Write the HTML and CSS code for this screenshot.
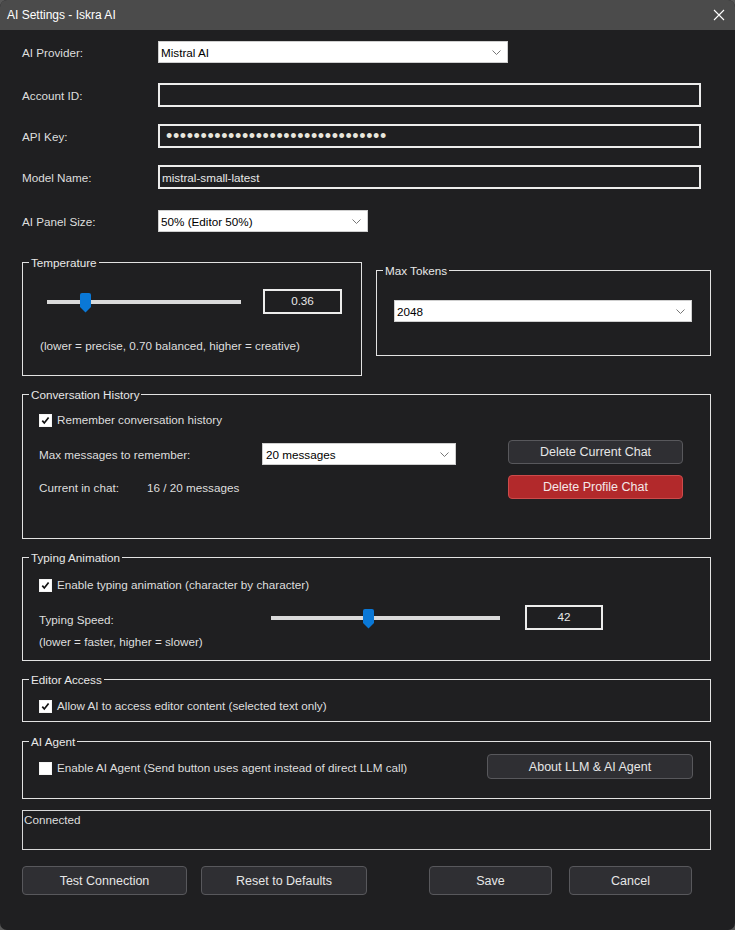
FILE: index.html
```html
<!DOCTYPE html>
<html>
<head>
	<title>AI Settings - Iskra AI</title>
	<link rel="stylesheet" href="styles.css">
</head>
<body>
<div class="window">
	<div class="titlebar">
		<span>AI Settings - Iskra AI</span>
		<svg class="close" width="12" height="12" viewBox="0 0 12 12"><path d="M1 1L11 11M11 1L1 11" stroke="#fff" stroke-width="1.1" fill="none"/></svg>
	</div>

	<div class="content">
		<div class="form-row">
			<label>AI Provider:</label>
			<div class="combo combo-provider">
				<span>Mistral AI</span>
				<svg width="9" height="5" viewBox="0 0 9 5"><path d="M0.5 0.5L4.5 4.5L8.5 0.5" stroke="#777" fill="none"/></svg>
			</div>
		</div>
		<div class="form-row row-account">
			<label>Account ID:</label>
			<div class="textbox"></div>
		</div>
		<div class="form-row row-key">
			<label>API Key:</label>
			<div class="textbox"><span class="dots">••••••••••••••••••••••••••••••••</span></div>
		</div>
		<div class="form-row row-model">
			<label>Model Name:</label>
			<div class="textbox">mistral-small-latest</div>
		</div>
		<div class="form-row row-panel">
			<label>AI Panel Size:</label>
			<div class="combo combo-panel">
				<span>50% (Editor 50%)</span>
				<svg width="9" height="5" viewBox="0 0 9 5"><path d="M0.5 0.5L4.5 4.5L8.5 0.5" stroke="#777" fill="none"/></svg>
			</div>
		</div>

		<div class="groups-top">
			<fieldset class="group group-temp">
				<legend>Temperature</legend>
				<div class="temp-body">
					<div class="slider-row">
						<div class="slider temp-slider">
							<svg class="thumb" style="left: calc((100% - 11px) * 0.18)" width="11" height="20" viewBox="0 0 11 20"><path d="M0 2Q0 0 2 0H9Q11 0 11 2V14L5.5 19.5L0 14Z" fill="#0a78d7"/></svg>
						</div>
						<div class="value-box">0.36</div>
					</div>
					<div class="hint temp-hint">(lower = precise, 0.70 balanced, higher = creative)</div>
				</div>
			</fieldset>

			<fieldset class="group group-tokens">
				<legend>Max Tokens</legend>
				<div class="tokens-body">
					<div class="combo combo-tokens">
						<span>2048</span>
						<svg width="9" height="5" viewBox="0 0 9 5"><path d="M0.5 0.5L4.5 4.5L8.5 0.5" stroke="#777" fill="none"/></svg>
					</div>
				</div>
			</fieldset>
		</div>

		<fieldset class="group group-history">
			<legend>Conversation History</legend>
			<div class="history-body">
				<div class="check">
					<span class="box"><svg width="11" height="11" viewBox="0 0 11 11"><path d="M2.3 5.6L4.3 8L8.6 2.4" stroke="#111" stroke-width="1.7" fill="none"/></svg></span>
					<span>Remember conversation history</span>
				</div>
				<div class="history-main">
					<div class="history-left">
						<div class="history-row max-row">
							<span class="max-label">Max messages to remember:</span>
							<div class="combo combo-messages">
								<span>20 messages</span>
								<svg width="9" height="5" viewBox="0 0 9 5"><path d="M0.5 0.5L4.5 4.5L8.5 0.5" stroke="#777" fill="none"/></svg>
							</div>
						</div>
						<div class="history-row current-row">
							<span class="current-label">Current in chat:</span>
							<span>16 / 20 messages</span>
						</div>
					</div>
					<div class="history-buttons">
						<button class="btn btn-small">Delete Current Chat</button>
						<button class="btn btn-small btn-danger">Delete Profile Chat</button>
					</div>
				</div>
			</div>
		</fieldset>

		<fieldset class="group group-typing">
			<legend>Typing Animation</legend>
			<div class="typing-body">
				<div class="check">
					<span class="box"><svg width="11" height="11" viewBox="0 0 11 11"><path d="M2.3 5.6L4.3 8L8.6 2.4" stroke="#111" stroke-width="1.7" fill="none"/></svg></span>
					<span>Enable typing animation (character by character)</span>
				</div>
				<div class="speed-row">
					<span class="speed-label">Typing Speed:</span>
					<div class="slider speed-slider">
						<svg class="thumb" style="left: calc((100% - 11px) * 0.42)" width="11" height="20" viewBox="0 0 11 20"><path d="M0 2Q0 0 2 0H9Q11 0 11 2V14L5.5 19.5L0 14Z" fill="#0a78d7"/></svg>
					</div>
					<div class="value-box speed-box">42</div>
				</div>
				<div class="hint speed-hint">(lower = faster, higher = slower)</div>
			</div>
		</fieldset>

		<fieldset class="group group-editor">
			<legend>Editor Access</legend>
			<div class="editor-body">
				<div class="check">
					<span class="box"><svg width="11" height="11" viewBox="0 0 11 11"><path d="M2.3 5.6L4.3 8L8.6 2.4" stroke="#111" stroke-width="1.7" fill="none"/></svg></span>
					<span>Allow AI to access editor content (selected text only)</span>
				</div>
			</div>
		</fieldset>

		<fieldset class="group group-agent">
			<legend>AI Agent</legend>
			<div class="agent-body">
				<div class="check">
					<span class="box"></span>
					<span>Enable AI Agent (Send button uses agent instead of direct LLM call)</span>
				</div>
				<button class="btn btn-about">About LLM &amp; AI Agent</button>
			</div>
		</fieldset>

		<div class="status">Connected</div>

		<div class="footer">
			<button class="btn btn-test">Test Connection</button>
			<button class="btn btn-reset">Reset to Defaults</button>
			<button class="btn btn-save">Save</button>
			<button class="btn btn-cancel">Cancel</button>
		</div>
	</div>
</div>
</body>
</html>
```

FILE: styles.css
```css
* {
	box-sizing: border-box;
}

body {
	margin: 0;
	background: #585858;
	font-family: "Liberation Sans", Arial, sans-serif;
	font-size: 11.7px;
	color: #dedede;
}

.window {
	width: 735px;
	height: 930px;
	background: #1f1f21;
	border-radius: 7px;
	overflow: hidden;
}

.titlebar {
	height: 30px;
	background: #4b4b4b;
	color: #fff;
	font-size: 12px;
	display: flex;
	align-items: center;
	justify-content: space-between;
	padding: 0 10px 0 7px;
}

.content {
	padding: 11px 24px 0 22px;
}

/* top form */

.form-row {
	display: flex;
	align-items: center;
}

.form-row label {
	width: 136px;
	flex: none;
	line-height: 14px;
	padding-top: 1px;
}

.row-account {
	margin-top: 20px;
}

.row-key,
.row-model {
	margin-top: 17px;
}

.row-panel {
	margin-top: 21px;
}

.combo {
	height: 22px;
	background: #fff;
	border: 1px solid #cfcfcf;
	color: #000;
	display: flex;
	align-items: center;
	justify-content: space-between;
	padding: 0 6px 0 2px;
}

.combo-provider {
	width: 350px;
}

.combo-panel {
	width: 210px;
}

.combo-tokens {
	width: 298px;
}

.combo-messages {
	width: 194px;
	padding-left: 3px;
}

.textbox {
	width: 543px;
	height: 24px;
	border: 2px solid #ececec;
	padding: 0 2px;
	display: flex;
	align-items: center;
	color: #e8e8e8;
}

.dots {
	font-size: 18px;
	letter-spacing: 0.6px;
	padding-left: 4px;
	color: #e8e6dc;
}

/* group boxes */

.group {
	margin: 0;
	padding: 0;
	min-width: 0;
	border: 1px solid #e2e2e2;
}

.group legend {
	margin-left: 6px;
	padding: 0 2px;
	line-height: 14px;
	color: #e8e8e8;
	position: relative;
	top: 1px;
}

.groups-top {
	display: flex;
	align-items: flex-start;
	gap: 14px;
	margin-top: 23px;
}

.group-temp {
	width: 340px;
	flex: none;
}

.group-tokens {
	flex: 1;
	margin-top: 8px;
}

.temp-body {
	padding: 20px 0 22px 24px;
}

.slider-row {
	display: flex;
	align-items: center;
	height: 25px;
}

.slider {
	position: relative;
	height: 4px;
	background: #dadada;
}

.temp-slider {
	width: 194px;
}

.thumb {
	position: absolute;
	top: -7px;
}

.value-box {
	width: 79px;
	height: 25px;
	border: 2px solid #ececec;
	display: flex;
	align-items: center;
	justify-content: center;
	color: #e8e8e8;
	padding-bottom: 2px;
}

.temp-slider + .value-box {
	margin-left: 22px;
}

.hint {
	line-height: 14px;
}

.temp-hint {
	margin-top: 25px;
	padding-left: 17px;
	margin-left: -24px;
}

.tokens-body {
	padding: 23px 19px 33px 17px;
}

.check {
	display: flex;
	align-items: center;
	gap: 5px;
	height: 14px;
	line-height: 14px;
}

.box {
	width: 13px;
	height: 13px;
	flex: none;
	background: #fff;
	border: 1px solid #3a3a3a;
	outline: 1px solid #f4f4f4;
	outline-offset: -1px;
	box-shadow: inset 0 0 0 1px #fff;
	display: flex;
	align-items: center;
	justify-content: center;
}

.group-history {
	margin-top: 11px;
}

.history-body {
	padding: 12px 27px 39px 16px;
}

.history-main {
	display: flex;
	justify-content: space-between;
	margin-top: 13px;
}

.history-row {
	display: flex;
	align-items: center;
}

.max-row {
	margin-top: 3px;
}

.max-label {
	width: 223px;
	padding-top: 1px;
}

.current-row {
	margin-top: 16px;
	line-height: 14px;
}

.current-label {
	width: 108px;
}

.history-buttons {
	display: flex;
	flex-direction: column;
	gap: 11px;
}

.group-typing {
	margin-top: 11px;
}

.typing-body {
	padding: 14px 0 11px 16px;
}

.speed-row {
	display: flex;
	align-items: center;
	height: 25px;
	margin-top: 13px;
}

.speed-label {
	width: 232px;
	padding-top: 4px;
}

.speed-slider {
	width: 229px;
	margin-top: 1px;
}

.speed-box {
	width: 78px;
	margin-left: 25px;
}

.speed-hint {
	margin-top: 5px;
}

.group-editor {
	margin-top: 11px;
}

.editor-body {
	padding: 13px 0 8px 16px;
}

.group-agent {
	margin-top: 12px;
}

.agent-body {
	display: flex;
	align-items: center;
	justify-content: space-between;
	height: 25px;
	box-sizing: content-box;
	padding: 6px 17px 19px 16px;
}

.agent-body .check {
	margin-top: 3px;
}

/* buttons */

.btn {
	font-family: "Liberation Sans", Arial, sans-serif;
	font-size: 12.5px;
	color: #e6e6e6;
	background: #2f2f33;
	border: 1px solid #58585c;
	border-radius: 4px;
	padding: 0;
	display: flex;
	align-items: center;
	justify-content: center;
}

.btn-small {
	width: 175px;
	height: 24px;
}

.btn-danger {
	background: #b2292b;
	border-color: #cc4b4b;
	color: #f4e8e8;
}

.btn-about {
	width: 206px;
	height: 25px;
}

.status {
	margin-top: 11px;
	height: 40px;
	border: 1px solid #d8d8d8;
	padding: 2px 1px;
	line-height: 14px;
}

.footer {
	display: flex;
	margin-top: 16px;
}

.footer .btn {
	height: 29px;
}

.btn-test {
	width: 165px;
}

.btn-reset {
	width: 166px;
	margin-left: 14px;
}

.btn-save {
	width: 123px;
	margin-left: 62px;
}

.btn-cancel {
	width: 123px;
	margin-left: 17px;
}
```
